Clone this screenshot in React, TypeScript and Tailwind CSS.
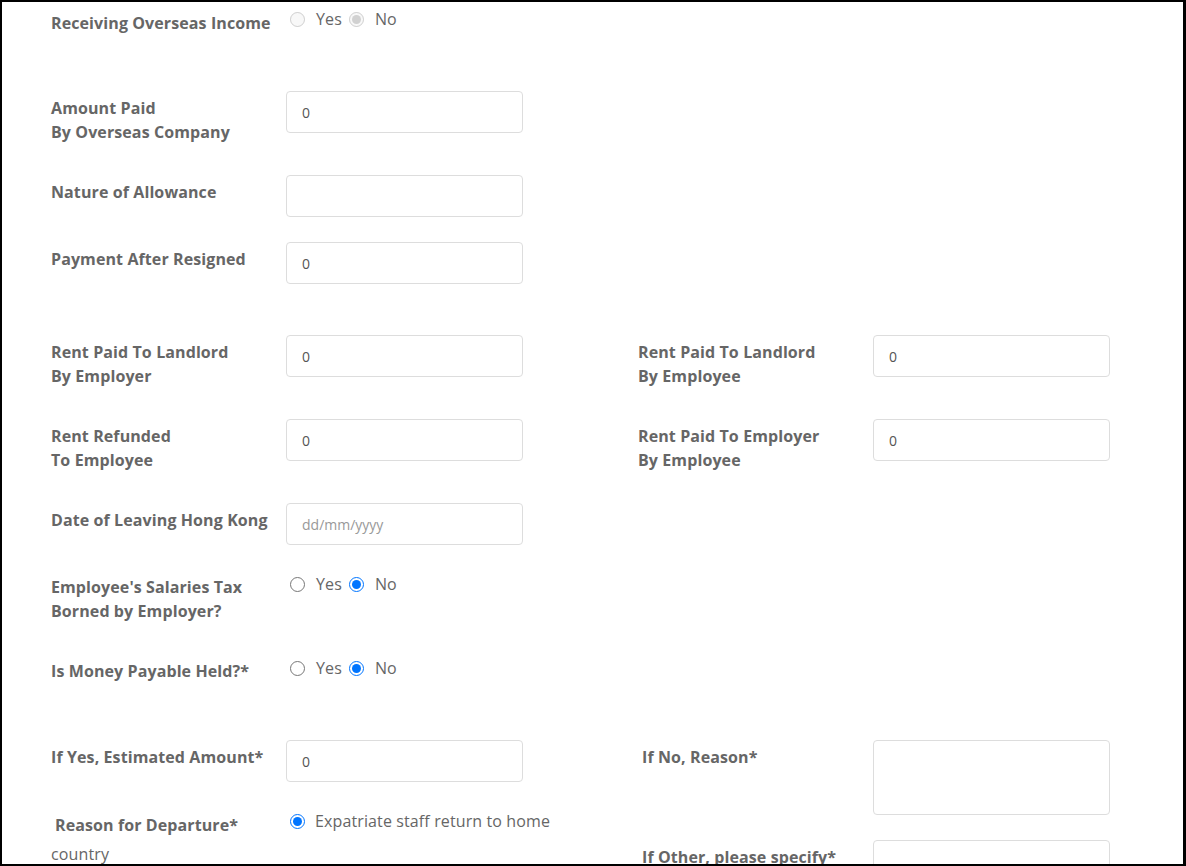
import type { ReactNode } from "react";

// plain field row: fixed label column, control to the right.
// height is fixed per row so the label's padding never pushes the layout.
function Row({
  label,
  children,
  className = "",
  labelPad = "pt-[5px]",
}: {
  label: ReactNode;
  children: ReactNode;
  className?: string;
  labelPad?: string;
}) {
  return (
    <div className={`flex items-start ${className}`}>
      <label className={`w-[235px] shrink-0 text-[16px] font-bold leading-6 tracking-[0.1px] text-[#666] ${labelPad}`}>
        {label}
      </label>
      {children}
    </div>
  );
}

function TextBox({ value, placeholder }: { value?: string; placeholder?: string }) {
  return (
    <input
      type="text"
      readOnly
      defaultValue={value}
      placeholder={placeholder}
      className="h-[42px] w-[237px] rounded-[4px] border border-[#dddddd] bg-white px-[15px] text-[14px] text-[#555] outline-none placeholder:text-[#999]"
    />
  );
}

function YesNo({ name, disabled = false }: { name: string; disabled?: boolean }) {
  return (
    <div className="flex h-6 items-center text-[16px] leading-6 tracking-[0.12px] text-[#666]">
      <input type="radio" name={name} disabled={disabled} className="m-0 ml-[4px] h-[15px] w-[15px]" />
      <span className="ml-[11px]">Yes</span>
      <input type="radio" name={name} disabled={disabled} defaultChecked className="m-0 ml-[7px] h-[15px] w-[15px]" />
      <span className="ml-[11px]">No</span>
    </div>
  );
}

export default function App() {
  return (
    <div className="h-[866px] w-[1186px] overflow-hidden border-2 border-r-[3px] border-black bg-white pl-[49px] pt-[5px] font-['Open_Sans',sans-serif] text-[#666]">
      <Row label="Receiving Overseas Income" labelPad="pt-1" className="h-[28px]">
        <YesNo name="overseas" disabled />
      </Row>

      <Row label={<>Amount Paid<br />By Overseas Company</>} className="mt-[56px] h-[52px]">
        <TextBox value="0" />
      </Row>

      <Row label="Nature of Allowance" className="mt-[32px] h-[42px]">
        <TextBox />
      </Row>

      <Row label="Payment After Resigned" className="mt-[25px] h-[42px]">
        <TextBox value="0" />
      </Row>

      <div className="mt-[51px] grid h-[52px] grid-cols-[587px_1fr]">
        <Row label={<>Rent Paid To Landlord<br />By Employer</>}>
          <TextBox value="0" />
        </Row>
        <Row label={<>Rent Paid To Landlord<br />By Employee</>}>
          <TextBox value="0" />
        </Row>
      </div>

      <div className="mt-[32px] grid h-[52px] grid-cols-[587px_1fr]">
        <Row label={<>Rent Refunded<br />To Employee</>}>
          <TextBox value="0" />
        </Row>
        <Row label={<>Rent Paid To Employer<br />By Employee</>}>
          <TextBox value="0" />
        </Row>
      </div>

      <Row label="Date of Leaving Hong Kong" className="mt-[32px] h-[42px]">
        <TextBox placeholder="dd/mm/yyyy" />
      </Row>

      <Row label={<>Employee's Salaries Tax<br />Borned by Employer?</>} className="mt-[27px] h-[52px]" labelPad="pt-[3px]">
        <YesNo name="taxborne" />
      </Row>

      <Row label="Is Money Payable Held?*" className="mt-[32px] h-[28px]" labelPad="pt-[3px]">
        <YesNo name="held" />
      </Row>

      <div className="mt-[56px] grid grid-cols-[587px_1fr]">
        <div>
          <Row label="If Yes, Estimated Amount*" className="h-[42px]">
            <TextBox value="0" />
          </Row>
          {/* label is floated, so the wrapped radio text drops back under it */}
          <div className="mt-[23px] w-[545px] text-[16px] leading-[33px] text-[#666]">
            <label className="float-left w-[235px] pb-[1px] pl-[4px] pt-[8px] font-bold leading-6 tracking-[0.1px]">
              Reason for Departure*
            </label>
            <input type="radio" name="reason" defaultChecked className="m-0 ml-[4px] inline-block h-[15px] w-[15px] align-[-2px]" />
            <span className="ml-[10px] tracking-[0.12px]">Expatriate staff return to home country</span>
          </div>
        </div>
        <div className="pl-1">
          <div className="flex h-[75px] items-start">
            <label className="w-[231px] shrink-0 pt-[5px] text-[16px] font-bold leading-6 tracking-[0.1px]">If No, Reason*</label>
            <textarea
              readOnly
              className="h-[75px] w-[237px] resize-none rounded-[4px] border border-[#dddddd] bg-white px-[15px] py-2 text-[14px] text-[#555] outline-none"
            />
          </div>
          <div className="mt-[25px] flex items-start">
            <label className="w-[231px] shrink-0 pt-[5px] text-[16px] font-bold leading-6 tracking-[0.1px]">
              If Other, please specify*
            </label>
            <TextBox />
          </div>
        </div>
      </div>
    </div>
  );
}
